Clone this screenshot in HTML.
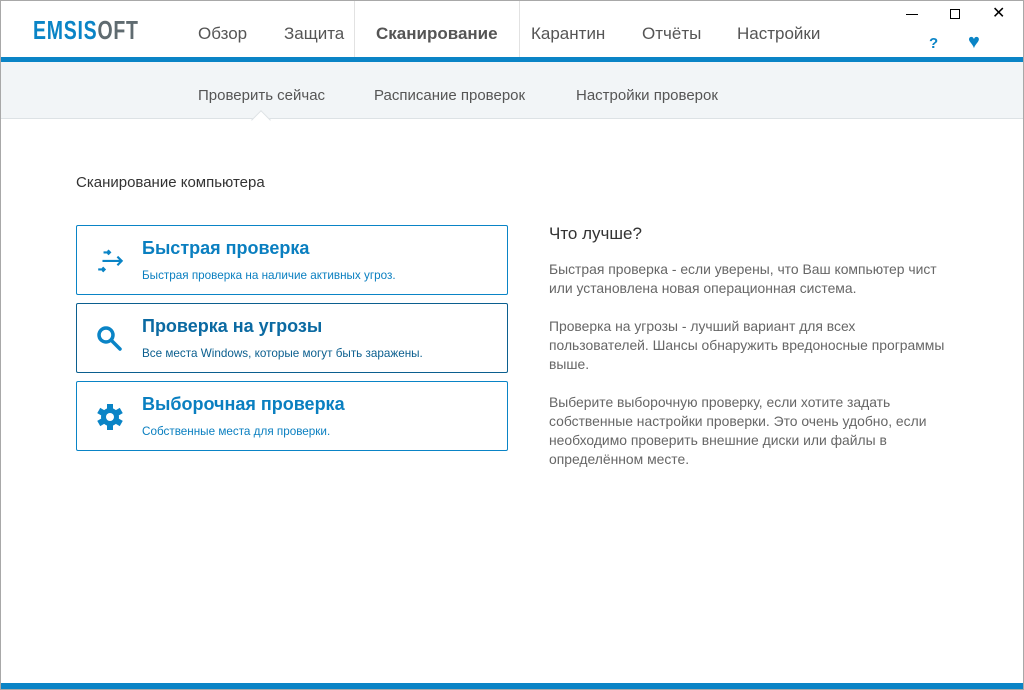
<!DOCTYPE html>
<html><head><meta charset="utf-8"><style>
*{margin:0;padding:0;box-sizing:border-box}
body{width:1024px;height:690px;overflow:hidden;background:#fff;font-family:"Liberation Sans",sans-serif;position:relative}
.frame{position:absolute;left:0;top:0;width:1024px;height:690px;border:1px solid #a8a8a8;pointer-events:none;z-index:5}
.abs{position:absolute}
.logo{left:33px;top:15px;font-size:26px;font-weight:bold;letter-spacing:1px;color:#5f6b70;transform:scaleX(.75);transform-origin:left}
.logo b{color:#0a84c6}
.nav{top:24px;font-size:17px;color:#555}
.bar{left:0;top:57px;width:1024px;height:5px;background:#0a84c6}
.sel{left:354px;top:0;width:166px;height:62px;background:#fff;border-left:1px solid #e2e2e2;border-right:1px solid #e2e2e2}
.sub{left:0;top:62px;width:1024px;height:57px;background:#f2f5f7;border-bottom:1px solid #dde2e5}
.st{top:87px;font-size:15px;color:#555}
.card{left:76px;width:432px;height:70px;border:1px solid #0a84c6;border-radius:2px}
.card h3{position:absolute;left:65px;top:12px;font-size:18px;color:#0a7fc0;font-weight:bold}
.card p{position:absolute;left:65px;top:43px;font-size:11.7px;color:#0a7fc0}
.card svg{position:absolute;left:18px;top:20px}
.rt{left:549px;font-size:13.9px;color:#666;line-height:19px;width:420px}
</style></head><body>
<div class="frame"></div>
<div class="abs sel"></div>
<div class="abs logo"><b>EMSIS</b>OFT</div>
<div class="abs nav" style="left:198px">Обзор</div>
<div class="abs nav" style="left:284px">Защита</div>
<div class="abs nav" style="left:376px;font-weight:bold;color:#555">Сканирование</div>
<div class="abs nav" style="left:531px">Карантин</div>
<div class="abs nav" style="left:642px">Отчёты</div>
<div class="abs nav" style="left:737px">Настройки</div>
<div class="abs" style="left:906px;top:14px;width:12px;height:1px;background:#000"></div>
<div class="abs" style="left:950px;top:9px;width:10px;height:10px;border:1px solid #000"></div>
<div class="abs" style="left:992px;top:3px;font-size:16px;color:#000">✕</div>
<div class="abs" style="left:929px;top:35px;font-size:15px;font-weight:bold;color:#0a84c6">?</div>
<div class="abs" style="left:968px;top:31px;font-size:20px;color:#0a84c6">♥</div>
<div class="abs bar"></div>
<div class="abs sub"></div>
<div class="abs" style="left:254px;top:113px;width:14px;height:14px;background:#fff;border-left:1px solid #dde2e5;border-top:1px solid #dde2e5;transform:rotate(45deg)"></div>
<div class="abs st" style="left:198px">Проверить сейчас</div>
<div class="abs st" style="left:374px">Расписание проверок</div>
<div class="abs st" style="left:576px">Настройки проверок</div>
<div class="abs" style="left:76px;top:174px;font-size:15px;color:#333">Сканирование компьютера</div>
<div class="abs card" style="top:225px"><svg width="32" height="32" viewBox="0 0 30 30" fill="none" stroke="#0a84c6" stroke-width="2"><path d="M8 6h6M12 4l2 2-2 2M7 14h18M21 10l4 4-4 4M3 22h6M7 20l2 2-2 2"/></svg><h3>Быстрая проверка</h3><p>Быстрая проверка на наличие активных угроз.</p></div>
<div class="abs card" style="top:303px;border-color:#0b5f8f"><svg width="30" height="30" viewBox="0 0 30 30" fill="none" stroke="#0a84c6" stroke-width="3.5"><circle cx="11" cy="11" r="7"/><path d="M16 16l9 9" stroke-linecap="round"/></svg><h3 style="color:#0b6aa2">Проверка на угрозы</h3><p style="color:#0b5f8f">Все места Windows, которые могут быть заражены.</p></div>
<div class="abs card" style="top:381px"><svg width="30" height="30" viewBox="0 0 30 30"><g fill="#0a84c6" transform="translate(15 15)"><circle r="9"/><rect x="-3" y="-13" width="6" height="26"/><rect x="-3" y="-13" width="6" height="26" transform="rotate(60)"/><rect x="-3" y="-13" width="6" height="26" transform="rotate(120)"/></g><circle cx="15" cy="15" r="4" fill="#fff"/></svg><h3>Выборочная проверка</h3><p>Собственные места для проверки.</p></div>
<div class="abs" style="left:549px;top:224px;font-size:17px;color:#333">Что лучше?</div>
<div class="abs rt" style="top:260px">Быстрая проверка - если уверены, что Ваш компьютер чист<br>или установлена новая операционная система.</div>
<div class="abs rt" style="top:317px">Проверка на угрозы - лучший вариант для всех<br>пользователей. Шансы обнаружить вредоносные программы<br>выше.</div>
<div class="abs rt" style="top:393px">Выберите выборочную проверку, если хотите задать<br>собственные настройки проверки. Это очень удобно, если<br>необходимо проверить внешние диски или файлы в<br>определённом месте.</div>
<div class="abs" style="left:0;top:683px;width:1024px;height:7px;background:#0a84c6"></div>
</body></html>
